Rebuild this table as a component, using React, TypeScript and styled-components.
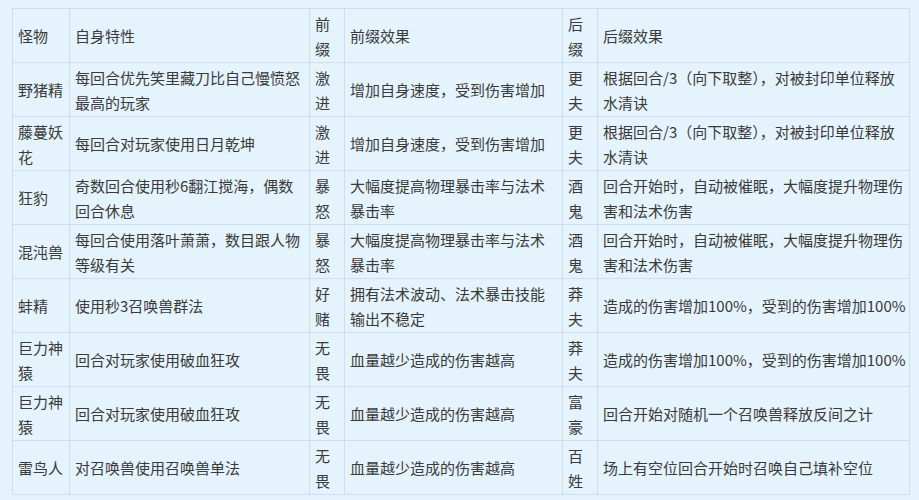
import React from 'react'
import styled, { createGlobalStyle } from 'styled-components'

const GlobalStyle = createGlobalStyle`
  html, body {
    margin: 0;
    background: #e5f3fc;
  }
  body {
    font-family: "Noto Sans CJK SC", "Noto Sans", sans-serif;
  }
`

const Page = styled.div`
  padding: 8px 0 0 12px;
`

const Table = styled.table`
  width: 897px;
  table-layout: fixed;
  border-collapse: collapse;
  color: #3a3a3a;
  font-size: 15px;
  line-height: 25px;
`

const Cell = styled.td<{ $last?: boolean }>`
  height: 53px;
  padding: 0 ${(p) => (p.$last ? '1px' : '5px')} 0 5px;
  border: 1px solid #cddfeb;
  vertical-align: middle;
  word-break: normal;
  overflow-wrap: normal;
`

const widths = [57, 240, 35, 218, 35, 312]

const header = ['怪物', '自身特性', '前缀', '前缀效果', '后缀', '后缀效果']

const rows: string[][] = [
  ['野猪精', '每回合优先笑里藏刀比自己慢愤怒最高的玩家', '激进', '增加自身速度，受到伤害增加', '更夫', '根据回合/3（向下取整），对被封印单位释放水清诀'],
  ['藤蔓妖花', '每回合对玩家使用日月乾坤', '激进', '增加自身速度，受到伤害增加', '更夫', '根据回合/3（向下取整），对被封印单位释放水清诀'],
  ['狂豹', '奇数回合使用秒6翻江搅海，偶数回合休息', '暴怒', '大幅度提高物理暴击率与法术暴击率', '酒鬼', '回合开始时，自动被催眠，大幅度提升物理伤害和法术伤害'],
  ['混沌兽', '每回合使用落叶萧萧，数目跟人物等级有关', '暴怒', '大幅度提高物理暴击率与法术暴击率', '酒鬼', '回合开始时，自动被催眠，大幅度提升物理伤害和法术伤害'],
  ['蚌精', '使用秒3召唤兽群法', '好赌', '拥有法术波动、法术暴击技能输出不稳定', '莽夫', '造成的伤害增加100%，受到的伤害增加100%'],
  ['巨力神猿', '回合对玩家使用破血狂攻', '无畏', '血量越少造成的伤害越高', '莽夫', '造成的伤害增加100%，受到的伤害增加100%'],
  ['巨力神猿', '回合对玩家使用破血狂攻', '无畏', '血量越少造成的伤害越高', '富豪', '回合开始对随机一个召唤兽释放反间之计'],
  ['雷鸟人', '对召唤兽使用召唤兽单法', '无畏', '血量越少造成的伤害越高', '百姓', '场上有空位回合开始时召唤自己填补空位'],
]

export default function App() {
  return (
    <>
      <GlobalStyle />
      <Page>
        <Table>
          <colgroup>
            {widths.map((w, i) => (
              <col key={i} style={{ width: w }} />
            ))}
          </colgroup>
          <tbody>
            <tr>
              {header.map((h, i) => (
                <Cell key={i} $last={i === header.length - 1}>
                  {h}
                </Cell>
              ))}
            </tr>
            {rows.map((r, i) => (
              <tr key={i}>
                {r.map((c, j) => (
                  <Cell key={j} $last={j === r.length - 1}>
                    {c}
                  </Cell>
                ))}
              </tr>
            ))}
          </tbody>
        </Table>
      </Page>
    </>
  )
}
